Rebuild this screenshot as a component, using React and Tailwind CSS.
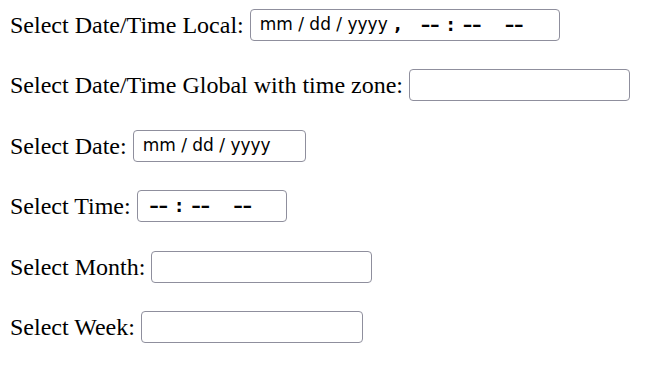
import React from "react";

const field = "font-['DejaVu_Sans',sans-serif] text-[17px] text-black";

function Dashes({ extra = "" }) {
  return (
    <span className={`flex w-[16px] shrink-0 justify-center text-[28px] leading-none tracking-[-1px] ${extra}`}>
      --
    </span>
  );
}

function TimeSegs() {
  return (
    <span className="flex items-center">
      <Dashes />
      <span className="flex w-[26px] shrink-0 justify-center text-[17px] font-bold leading-none">:</span>
      <Dashes />
      <Dashes extra="ml-[26px]" />
    </span>
  );
}

function Box({ w, children, pl = "pl-[9px]" }) {
  return (
    <div
      className={`ml-[6px] h-[32px] ${w} shrink-0 border border-[#8f8f9d] rounded-[4px] bg-white flex items-center ${pl} ${field} whitespace-pre`}
    >
      {children}
    </div>
  );
}

export default function App() {
  return (
    <div className="w-[648px] h-[365px] bg-white text-black font-['Liberation_Serif',serif] text-[24px] pl-[10px] pt-[9px] flex flex-col gap-[28.4px]">
      <div className="flex items-center h-[32px]">
        <span>Select Date/Time Local:</span>
        <Box w="w-[310px]">
          <span className="w-[128px] shrink-0">mm / dd / yyyy</span>
          <span className="flex w-[20px] shrink-0 justify-center font-bold">,</span>
          <span className="ml-[14px] flex"><TimeSegs /></span>
        </Box>
      </div>
      <div className="flex items-center h-[32px]">
        <span>Select Date/Time Global with time zone:</span>
        <Box w="w-[221px]" />
      </div>
      <div className="flex items-center h-[32px]">
        <span>Select Date:</span>
        <Box w="w-[173px]">
          <span>mm / dd / yyyy</span>
        </Box>
      </div>
      <div className="flex items-center h-[32px]">
        <span>Select Time:</span>
        <Box w="w-[150px]" pl="pl-[12.5px]">
          <TimeSegs />
        </Box>
      </div>
      <div className="flex items-center h-[32px]">
        <span>Select Month:</span>
        <Box w="w-[221px]" />
      </div>
      <div className="flex items-center h-[32px]">
        <span>Select Week:</span>
        <Box w="w-[222px]" />
      </div>
    </div>
  );
}
